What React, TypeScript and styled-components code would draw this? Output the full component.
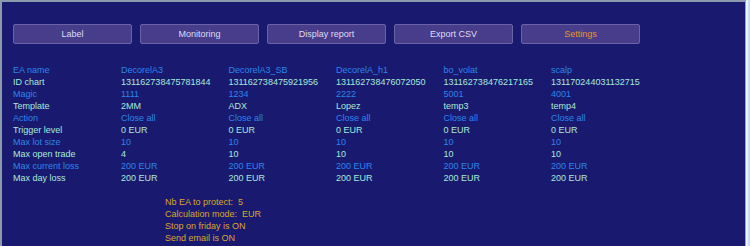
import React from "react";
import styled, { createGlobalStyle } from "styled-components";

const Global = createGlobalStyle`
  html, body { margin: 0; padding: 0; background: #c9dcf1; }
  body { font-family: "Liberation Sans", Arial, sans-serif; }
`;

const Frame = styled.div`
  width: 750px;
  height: 246px;
  overflow: hidden;
  background: #c9dcf1;
`;

const Panel = styled.div`
  box-sizing: border-box;
  width: 746px;
  height: 260px;
  background: #191970;
  border-top: 2px solid #8b9bab;
  border-left: 2px solid #8b9bab;
  border-right: 1px solid #9aa4b6;
  box-shadow: 2px 0 0 #eef4fb;
  padding: 22px 0 0 11px;
  font-size: 9px;
`;

const Toolbar = styled.div`
  display: flex;
  gap: 8px;
`;

const Button = styled.div<{ $active?: boolean }>`
  box-sizing: border-box;
  width: 119px;
  height: 20px;
  display: flex;
  align-items: center;
  justify-content: center;
  background: #483d8b;
  border: 1px solid #6a62a6;
  border-radius: 2px;
  color: ${(p) => (p.$active ? "#e8922c" : "#dcdcf4")};
  font-size: 9px;
`;

const Table = styled.div`
  margin-top: 20px;
  display: grid;
  grid-template-columns: 108px repeat(5, 107.5px);
  grid-auto-rows: 12px;
  line-height: 12px;
`;

const Cell = styled.div<{ $tone: "blue" | "light" }>`
  color: ${(p) => (p.$tone === "blue" ? "#2b86ec" : "#a8ead8")};
  white-space: nowrap;
`;

const Summary = styled.div`
  margin-top: 12px;
  padding-left: 152px;
  color: #d9a82a;
  line-height: 12px;
  white-space: pre;
`;

const rows: { label: string; values: string[]; tone: "blue" | "light" }[] = [
  { label: "EA name", values: ["DecorelA3", "DecorelA3_SB", "DecorelA_h1", "bo_volat", "scalp"], tone: "blue" },
  {
    label: "ID chart",
    values: ["131162738475781844", "131162738475921956", "131162738476072050", "131162738476217165", "131170244031132715"],
    tone: "light",
  },
  { label: "Magic", values: ["1111", "1234", "2222", "5001", "4001"], tone: "blue" },
  { label: "Template", values: ["2MM", "ADX", "Lopez", "temp3", "temp4"], tone: "light" },
  { label: "Action", values: Array(5).fill("Close all"), tone: "blue" },
  { label: "Trigger level", values: Array(5).fill("0 EUR"), tone: "light" },
  { label: "Max lot size", values: Array(5).fill("10"), tone: "blue" },
  { label: "Max open trade", values: ["4", "10", "10", "10", "10"], tone: "light" },
  { label: "Max current loss", values: Array(5).fill("200 EUR"), tone: "blue" },
  { label: "Max day loss", values: Array(5).fill("200 EUR"), tone: "light" },
];

const buttons = ["Label", "Monitoring", "Display report", "Export CSV", "Settings"];

export default function App() {
  return (
    <Frame>
      <Global />
      <Panel>
        <Toolbar>
          {buttons.map((b) => (
            <Button key={b} $active={b === "Settings"}>
              {b}
            </Button>
          ))}
        </Toolbar>
        <Table>
          {rows.map((r) => (
            <React.Fragment key={r.label}>
              <Cell $tone={r.tone}>{r.label}</Cell>
              {r.values.map((v, i) => (
                <Cell key={i} $tone={r.tone}>
                  {v}
                </Cell>
              ))}
            </React.Fragment>
          ))}
        </Table>
        <Summary>
          <div>{"Nb EA to protect:  5"}</div>
          <div>{"Calculation mode:  EUR"}</div>
          <div>Stop on friday is ON</div>
          <div>Send email is ON</div>
        </Summary>
      </Panel>
    </Frame>
  );
}
